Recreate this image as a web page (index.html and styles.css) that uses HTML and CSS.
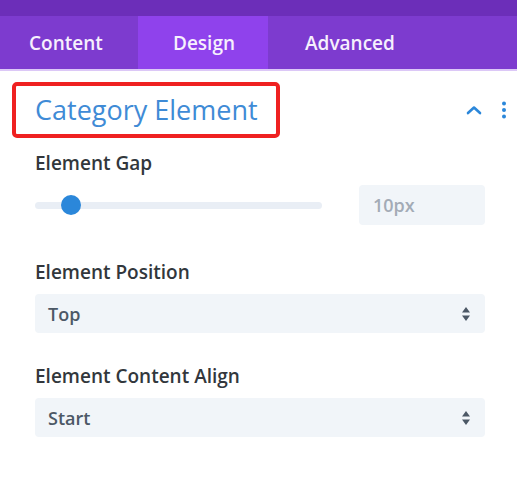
FILE: index.html
```html
<!DOCTYPE html>
<html>
<head>
<meta charset="utf-8">
<link rel="stylesheet" href="styles.css">
</head>
<body>
<div class="topbar"></div>
<nav class="tabs">
  <div class="tab tab-content">Content</div>
  <div class="tab tab-design active">Design</div>
  <div class="tab tab-advanced">Advanced</div>
</nav>
<section class="panel">
  <div class="panel-head">
    <h2 class="title">Category Element</h2>
    <div class="head-icons">
      <svg class="chev" width="16" height="10" viewBox="0 0 16 10"><path d="M2 8 L8 2.5 L14 8" fill="none" stroke="#2b87da" stroke-width="2.6" stroke-linecap="round" stroke-linejoin="round"/></svg>
      <svg class="dots" width="6" height="18" viewBox="0 0 6 18"><circle cx="3" cy="2.5" r="2" fill="#2b87da"/><circle cx="3" cy="9" r="2" fill="#2b87da"/><circle cx="3" cy="15.5" r="2" fill="#2b87da"/></svg>
    </div>
  </div>
  <div class="field field-gap">
    <div class="label">Element Gap</div>
    <div class="range-row">
      <div class="track"><span class="thumb"></span></div>
      <div class="num">10px</div>
    </div>
  </div>
  <div class="field field-pos">
    <div class="label">Element Position</div>
    <div class="select"><span>Top</span>
      <svg width="10" height="16" viewBox="0 0 10 16"><path d="M5 1 L9 6.5 H1 Z M5 15 L9 9.5 H1 Z" fill="#4c5866"/></svg>
    </div>
  </div>
  <div class="field field-align">
    <div class="label">Element Content Align</div>
    <div class="select"><span>Start</span>
      <svg width="10" height="16" viewBox="0 0 10 16"><path d="M5 1 L9 6.5 H1 Z M5 15 L9 9.5 H1 Z" fill="#4c5866"/></svg>
    </div>
  </div>
</section>
</body>
</html>
```
FILE: styles.css
```css
html, body {
  margin: 0;
  padding: 0;
  background: #ffffff;
  font-family: "Open Sans", "Noto Sans", sans-serif;
}
.topbar {
  height: 16px;
  background: #6c2eb9;
}
.tabs {
  display: flex;
  height: 53px;
  background: #7d3bcf;
  border-bottom: 2px solid #dcc8f7;
}
.tab {
  box-sizing: border-box;
  display: flex;
  align-items: center;
  color: #f6f0fd;
  font-size: 19px;
  font-weight: 600;
}
.tab-content { width: 138px; padding-left: 29px; }
.tab-design { width: 130px; padding-left: 35px; }
.tab-advanced { width: 140px; padding-left: 37px; }
.tab.active {
  background: #8f42ec;
}
.panel {
  padding: 11px 32px 0 35px;
}
.panel-head {
  display: flex;
  align-items: center;
  justify-content: space-between;
  margin-left: -23px;
  margin-right: -22px;
}
.title {
  margin: 0;
  box-sizing: border-box;
  width: 268px;
  height: 56px;
  border: 4px solid #ef2121;
  border-radius: 5px;
  padding: 0 0 2px 19px;
  display: flex;
  align-items: center;
  font-size: 27px;
  font-weight: 400;
  color: #3f8bd6;
}
.head-icons {
  display: flex;
  align-items: center;
  gap: 19px;
}
.chev { margin-top: 0; }
.field-gap { margin-top: 14px; }
.field-pos { margin-top: 36px; }
.field-align { margin-top: 32px; }
.label {
  font-size: 19px;
  font-weight: 600;
  color: #32373c;
  line-height: 22px;
}
.range-row {
  display: flex;
  align-items: center;
  justify-content: space-between;
  margin-top: 11px;
}
.track {
  position: relative;
  width: 287px;
  height: 7px;
  border-radius: 4px;
  background: #e9eef5;
}
.thumb {
  position: absolute;
  left: 26px;
  top: -7px;
  width: 20px;
  height: 20px;
  border-radius: 50%;
  background: #2b87da;
}
.num {
  box-sizing: border-box;
  width: 126px;
  height: 40px;
  border-radius: 4px;
  background: #f1f5f9;
  color: #a3abb6;
  font-size: 18px;
  font-weight: 600;
  display: flex;
  align-items: center;
  padding-left: 14px;
}
.select {
  margin-top: 11px;
  box-sizing: border-box;
  height: 39px;
  border-radius: 4px;
  background: #f1f5f9;
  display: flex;
  align-items: center;
  justify-content: space-between;
  padding: 0 14px 0 13px;
  color: #4c5866;
  font-size: 18px;
  font-weight: 600;
}
```
